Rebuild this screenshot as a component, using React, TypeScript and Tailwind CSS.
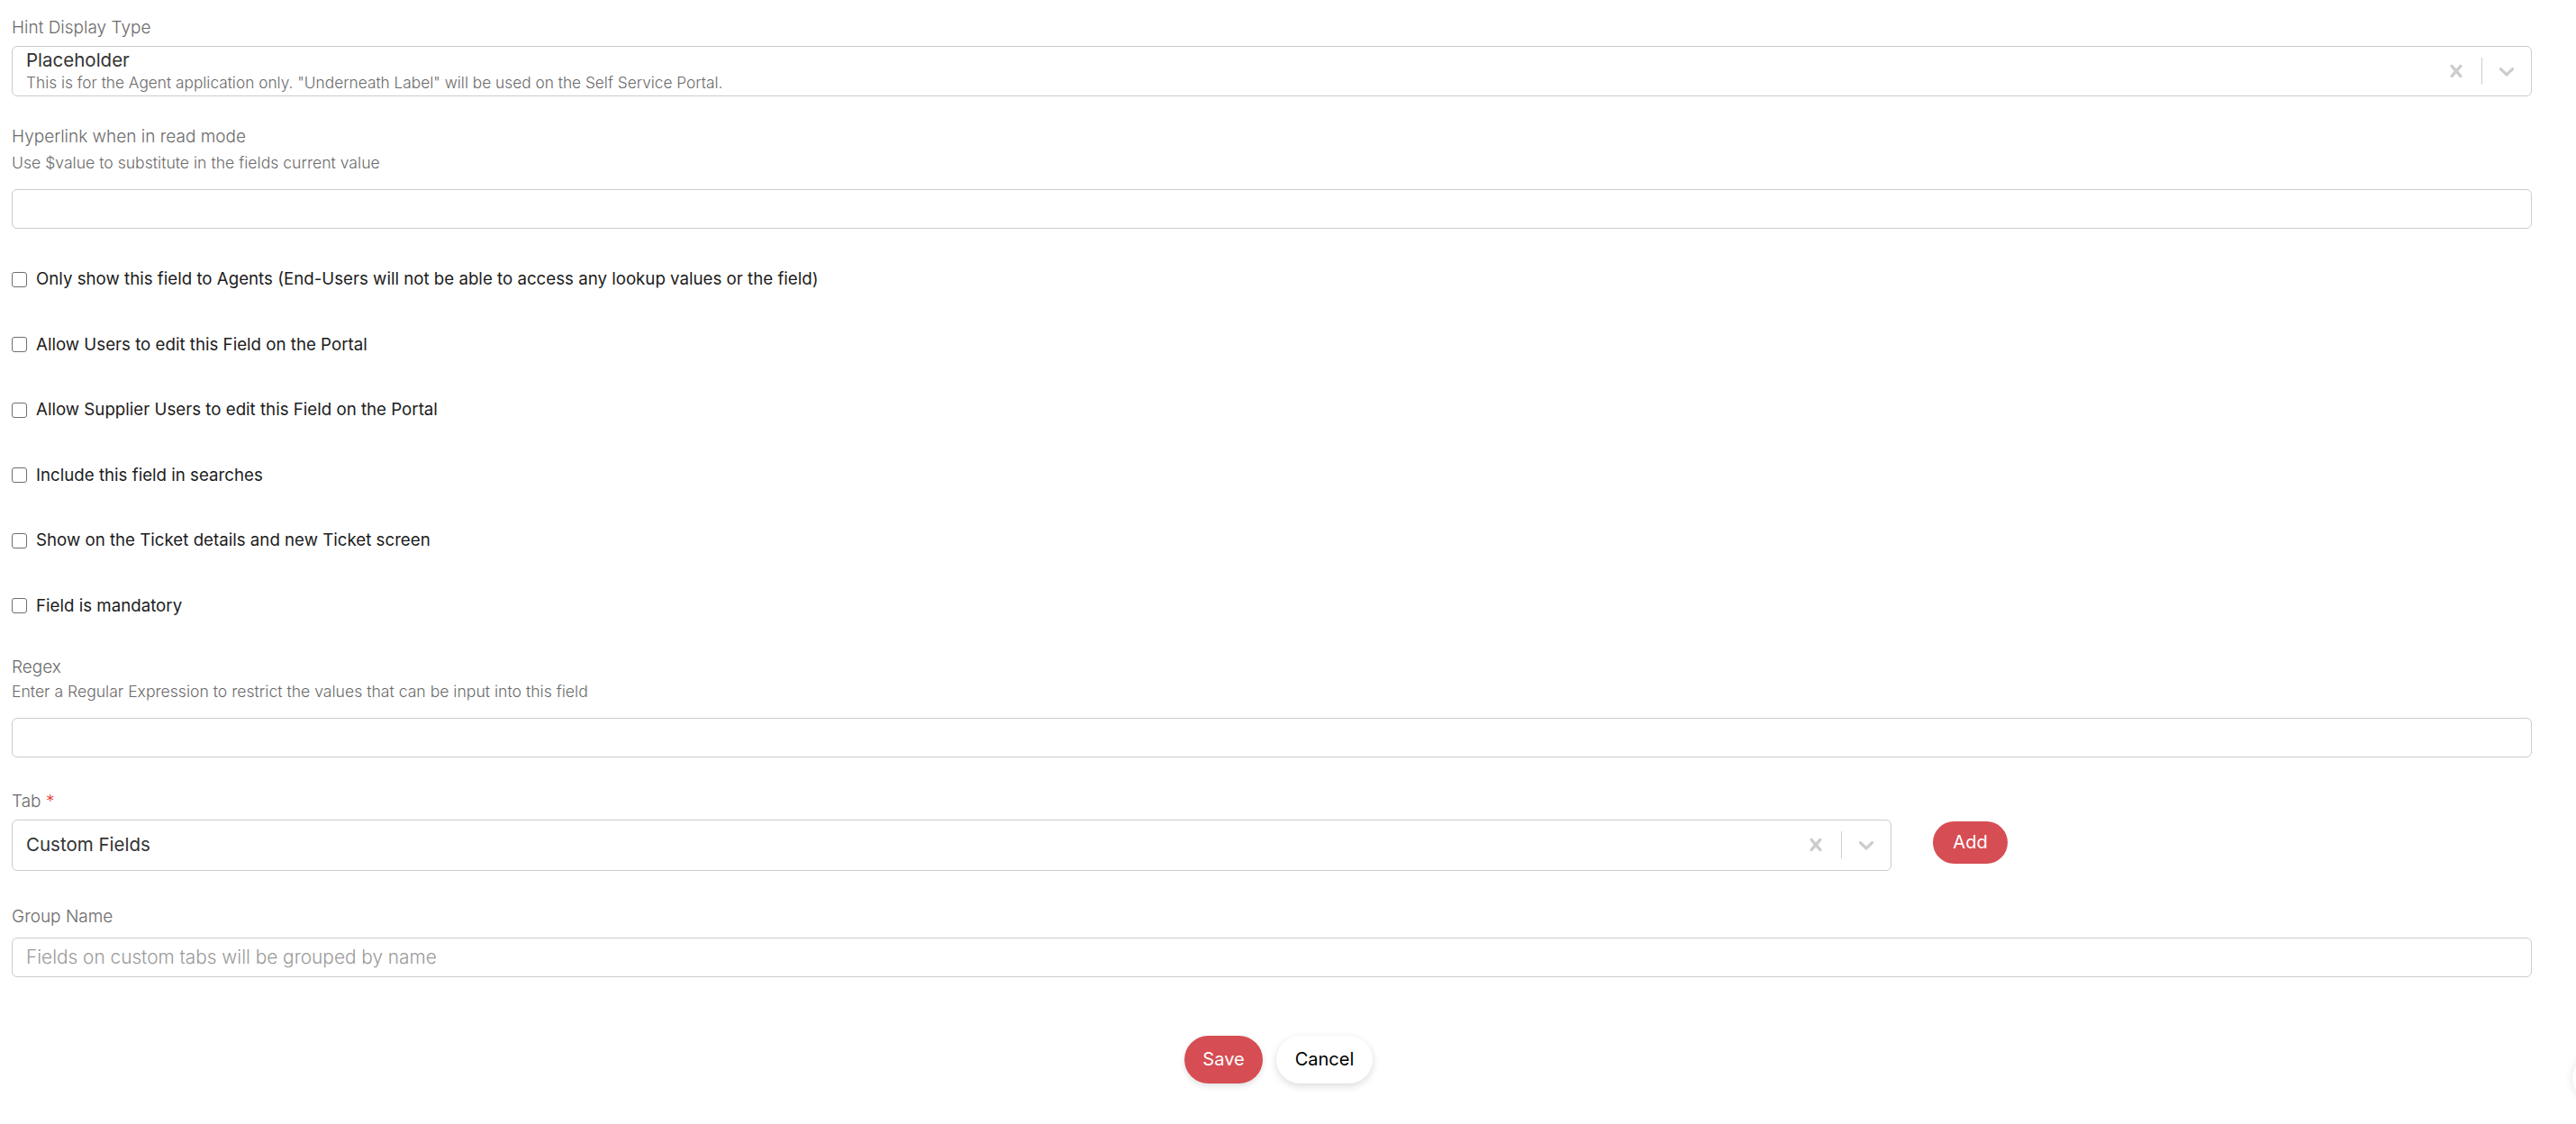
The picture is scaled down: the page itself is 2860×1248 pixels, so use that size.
import React from "react";

const font = { fontFamily: "Inter, 'Open Sans', sans-serif" };

function CrossIcon() {
  return (
    <svg viewBox="0 0 20 20" className="h-[28px] w-[28px] fill-[#cccccc]">
      <path d="M14.348 14.849c-0.469 0.469-1.229 0.469-1.697 0l-2.651-3.030-2.651 3.029c-0.469 0.469-1.229 0.469-1.697 0-0.469-0.469-0.469-1.229 0-1.697l2.758-3.15-2.759-3.152c-0.469-0.469-0.469-1.228 0-1.697s1.228-0.469 1.697 0l2.652 3.031 2.651-3.031c0.469-0.469 1.228-0.469 1.697 0s0.469 1.229 0 1.697l-2.758 3.152 2.758 3.15c0.469 0.469 0.469 1.229 0 1.698z" />
    </svg>
  );
}

function ChevronIcon() {
  return (
    <svg viewBox="0 0 20 20" className="h-[28px] w-[28px] fill-[#cccccc]">
      <path d="M4.516 7.548c0.436-0.446 1.043-0.481 1.576 0l3.908 3.747 3.908-3.747c0.533-0.481 1.141-0.446 1.574 0 0.436 0.445 0.408 1.197 0 1.615-0.406 0.418-4.695 4.502-4.695 4.502-0.217 0.223-0.502 0.335-0.787 0.335s-0.57-0.112-0.789-0.335c0 0-4.287-4.084-4.695-4.502s-0.436-1.17 0-1.615z" />
    </svg>
  );
}

function Indicators() {
  return (
    <div className="flex items-center self-stretch shrink-0">
      <div className="px-[14px]">
        <CrossIcon />
      </div>
      <span className="w-px h-[30px] bg-[#cccccc]" />
      <div className="px-[13px]">
        <ChevronIcon />
      </div>
    </div>
  );
}

function Label({ children }: { children: React.ReactNode }) {
  return <div className="text-[19px] leading-6 text-[#6b6b6b] font-light">{children}</div>;
}

function SubText({ children }: { children: React.ReactNode }) {
  return <div className="text-[17.6px] leading-5 text-[#6b6b6b] font-light">{children}</div>;
}

function TextBox({ placeholder, className = "" }: { placeholder?: string; className?: string }) {
  return (
    <div
      className={`h-[44px] border border-[#cccccc] rounded-[6px] flex items-center px-[15px] text-[20.8px] text-[#9a9a9a] font-light ${className}`}
    >
      {placeholder}
    </div>
  );
}

function Check({ label, className = "" }: { label: string; className?: string }) {
  return (
    <div className={`flex items-center h-6 ${className}`}>
      <span className="w-[17px] h-[17px] border-[1.5px] border-[#6f6f6f] rounded-[3px] bg-white shrink-0" />
      <span className="ml-[10px] text-[18.7px] text-[#1c1c1c]">{label}</span>
    </div>
  );
}

const options = [
  "Only show this field to Agents (End-Users will not be able to access any lookup values or the field)",
  "Allow Users to edit this Field on the Portal",
  "Allow Supplier Users to edit this Field on the Portal",
  "Include this field in searches",
  "Show on the Ticket details and new Ticket screen",
  "Field is mandatory",
];

export default function App() {
  return (
    <div className="relative w-[2860px] h-[1248px] bg-white overflow-hidden" style={font}>
      <div className="w-[2824px] pl-[13px] pr-[13px] pt-[19px] flex flex-col">
        <Label>Hint Display Type</Label>
        <div className="mt-[8px] h-[56px] border border-[#cccccc] rounded-[6px] flex items-stretch overflow-hidden">
          <div className="flex-1 pl-[15px] pt-[1px] flex flex-col">
            <span className="text-[20.5px] leading-[28px] text-[#333333]">Placeholder</span>
            <span className="text-[17.3px] leading-[22px] text-[#6b6b6b] font-light">
              This is for the Agent application only. "Underneath Label" will be used on the Self Service Portal.
            </span>
          </div>
          <Indicators />
        </div>

        <div className="mt-[33px]">
          <Label>Hyperlink when in read mode</Label>
        </div>
        <div className="mt-[7px]">
          <SubText>Use $value to substitute in the fields current value</SubText>
        </div>
        <TextBox className="mt-[19px]" />

        <div className="mt-[44px] flex flex-col gap-[48.6px]">
          {options.map((o) => (
            <Check key={o} label={o} />
          ))}
        </div>

        <div className="mt-[44px]">
          <Label>Regex</Label>
        </div>
        <div className="mt-[5px]">
          <SubText>Enter a Regular Expression to restrict the values that can be input into this field</SubText>
        </div>
        <TextBox className="mt-[19px]" />

        <div className="mt-[37px]">
          <Label>
            Tab <span className="text-[#e53935]">*</span>
          </Label>
        </div>
        <div className="mt-[8px] flex items-start">
          <div className="w-[2087px] h-[57px] border border-[#cccccc] rounded-[6px] flex items-center">
            <span className="flex-1 pl-[15px] text-[20.5px] text-[#333333]">Custom Fields</span>
            <Indicators />
          </div>
          <button className="ml-[46px] mt-[2px] w-[83px] h-[47px] rounded-full bg-[#d64d53] text-white text-[20px]">
            Add
          </button>
        </div>

        <div className="mt-[39px]">
          <Label>Group Name</Label>
        </div>
        <TextBox className="mt-[11px]" placeholder="Fields on custom tabs will be grouped by name" />

        <div className="mt-[65px] flex justify-center gap-[15px] pl-[15px]">
          <button className="w-[87px] h-[53px] rounded-full bg-[#d64d53] text-white text-[20px] shadow-[0_3px_6px_rgba(0,0,0,0.12)]">
            Save
          </button>
          <button className="w-[107px] h-[53px] rounded-full bg-white text-black text-[20px] shadow-[0_3px_8px_rgba(0,0,0,0.14)]">
            Cancel
          </button>
        </div>
      </div>

      {/* floating widget tucked past the right edge */}
      <div className="absolute right-[-46px] top-[1172px] w-[50px] h-[50px] rounded-full bg-white shadow-[0_0_10px_rgba(0,0,0,0.12)]" />
    </div>
  );
}
